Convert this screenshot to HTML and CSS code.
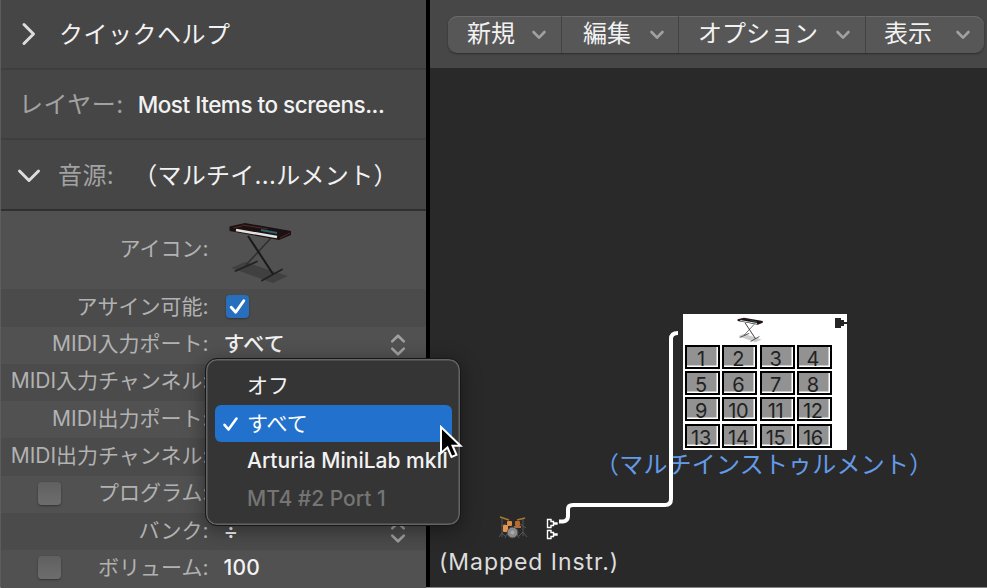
FILE: index.html
```html
<!DOCTYPE html>
<html lang="ja">
<head>
<meta charset="utf-8">
<title>Environment</title>
<link rel="stylesheet" href="styles.css">
</head>
<body>
<svg class="defs" width="0" height="0">
  <defs>
    <symbol id="chev" viewBox="0 0 16 10"><path d="M2.5 2 8 7.7 13.5 2" fill="none" stroke="currentColor" stroke-width="2.6" stroke-linecap="round" stroke-linejoin="round"/></symbol>
    <symbol id="stepper" viewBox="0 0 16 24"><path d="M2.2 8.4 8 2.7 13.8 8.4M2.2 15.6 8 21.3 13.8 15.6" fill="none" stroke="currentColor" stroke-width="2.6" stroke-linecap="round" stroke-linejoin="round"/></symbol>
    <symbol id="keyboard" viewBox="0 0 66 62">
      <path d="M3 46 17 40 60 54 45 61Z" fill="#000" opacity=".2"/>
      <path d="M43 16 18 43" stroke="#303030" stroke-width="1.6"/>
      <path d="M20 14 45 52" stroke="#191919" stroke-width="2"/>
      <path d="M7.500 49 29 39.500M34 58.500 54 47.500" stroke="#222" stroke-width="1.800" stroke-linecap="round"/>
      <path d="M1.500 4.500 17 1 63 9 63 13 51 18 1.500 9Z" fill="#1b1112"/>
      <path d="M14 3 40 7M5 6 14 4M52 16 62 11" stroke="#552827" stroke-width="1"/>
      <path d="M8 8 49 15" stroke="#e2e2e2" stroke-width="2.500"/>
      <path d="M33 8 49 11" stroke="#27636b" stroke-width="2"/>
    </symbol>
  </defs>
</svg>
<div class="app">
  <aside class="inspector">
    <header class="head">
      <svg class="right" viewBox="0 0 16 24"><path d="M3 2.500 12.500 12 3 21.500"/></svg>
      <span class="title">クイックヘルプ</span>
    </header>
    <header class="head layer">
      <span class="muted">レイヤー:</span><span class="layer-value">Most Items to screens...</span>
    </header>
    <header class="head source">
      <svg class="down" viewBox="0 0 24 16"><path d="M2.500 3 12 12.500 21.500 3"/></svg>
      <span class="muted">音源:</span><span class="source-value">（マルチイ...ルメント）</span>
    </header>
    <div class="fields">
      <div class="row tall"><span class="label">アイコン:</span><svg class="instrument"><use href="#keyboard"/></svg></div>
      <div class="row assign"><span class="label">アサイン可能:</span><span class="box on"><svg viewBox="0 0 22 22"><path d="M5 11.800 9.300 16.500 17 5.500"/></svg></span></div>
      <div class="row"><span class="label">MIDI入力ポート:</span><span class="value">すべて</span><svg class="step"><use href="#stepper"/></svg></div>
      <div class="row"><span class="label">MIDI入力チャンネル:</span></div>
      <div class="row"><span class="label">MIDI出力ポート:</span></div>
      <div class="row"><span class="label">MIDI出力チャンネル:</span></div>
      <div class="row"><span class="box off"></span><span class="label">プログラム:</span></div>
      <div class="row"><span class="label">バンク:</span><span class="value divide">÷</span><svg class="step"><use href="#stepper"/></svg></div>
      <div class="row"><span class="box off"></span><span class="label">ボリューム:</span><span class="value">100</span></div>
    </div>
  </aside>
  <main class="work">
    <nav class="bar">
      <div class="menus">
        <div class="menu new">新規<svg><use href="#chev"/></svg></div>
        <div class="menu edit">編集<svg><use href="#chev"/></svg></div>
        <div class="menu option">オプション<svg><use href="#chev"/></svg></div>
        <div class="menu view">表示<svg><use href="#chev"/></svg></div>
      </div>
    </nav>
    <div class="canvas">
      <div class="multi">
        <svg class="mini"><use href="#keyboard"/></svg>
        <svg class="port" viewBox="0 0 12 10"><path d="M0 0H6V2H9V4H12V6H9V8H6V10H0Z" fill="#252525"/></svg>
        <div class="grid">
          <span>1</span><span>2</span><span>3</span><span>4</span>
          <span>5</span><span>6</span><span>7</span><span>8</span>
          <span>9</span><span>10</span><span>11</span><span>12</span>
          <span>13</span><span>14</span><span>15</span><span>16</span>
        </div>
      </div>
      <div class="multi-name">（マルチインストゥルメント）</div>
      <svg class="cable" viewBox="0 0 130 206"><path d="M0 193.500H4Q9 193 9 188V181Q9 177 14 177H106Q112 177 112 171V11Q112 5 119 5" fill="none" stroke="#fff" stroke-width="4"/></svg>
      <svg class="drums" viewBox="0 0 30 23">
        <path d="M4 3V21M1 21 4 17 8 21M25 3V20M21 20 25 16 29 21M3 10 8 8M22 8 28 12M9 18 7 22M19 18 21 22" fill="none" stroke="#555" stroke-width="1"/>
        <path d="M2 1 11 4M19 4 27 2" stroke="#a4782e" stroke-width="1.800"/>
        <rect x="9" y="5" width="5" height="5" rx="1" fill="#dc8c49"/><rect x="17" y="5" width="5" height="5" rx="1" fill="#bd682c"/>
        <rect x="5" y="9" width="5" height="7" rx="1" fill="#e6944e"/><path d="M16 11H23" stroke="#d48a46" stroke-width="1.500"/>
        <circle cx="14.500" cy="16.500" r="5.300" fill="#8b8b8b" stroke="#555"/><circle cx="14.500" cy="16.500" r="2" fill="#aaa"/>
      </svg>
      <svg class="outs" viewBox="0 0 12 22"><path d="M1.500 1.500H5V3.500H7.500V5H11V6H7.500V7.500H5V9.500H1.500ZM1.500 12.500H5V14.500H7.500V16H11V17H7.500V18.500H5V20.500H1.500Z" fill="#292929" stroke="#fff" stroke-width="1.400"/></svg>
      <div class="mapped-name">(Mapped Instr.)</div>
    </div>
  </main>
</div>
<div class="popup">
  <div class="item kana">オフ</div>
  <div class="item kana selected"><svg viewBox="0 0 18 18"><path d="M2.500 9.800 6.500 14.500 14.500 3.500"/></svg>すべて</div>
  <div class="item">Arturia MiniLab mkII</div>
  <div class="item disabled">MT4 #2 Port 1</div>
</div>
<svg class="cursor" viewBox="0 0 26 36"><path d="M2 2V28L8.500 22.500 12.500 32 17.500 29.800 13.500 20.700H21.500Z" fill="#000" stroke="#fff" stroke-width="2"/></svg>
</body>
</html>
```
FILE: styles.css
```css
* { box-sizing: border-box; }
body { margin: 0; width: 987px; height: 588px; overflow: hidden; position: relative; background: #292929; color: #f2f2f2; font-family: Inter, "Noto Sans CJK JP", sans-serif; white-space: nowrap; }
.defs { position: absolute; }
svg { display: block; flex: none; }
.app { display: flex; height: 588px; border-bottom: 1px solid #858585; }
.inspector { width: 430px; flex: none; border-left: 1px solid #5c5c5c; border-right: 4px solid #000; background: #464646; }
.head { height: 70px; display: flex; align-items: center; font-size: 24px; line-height: 36px; border-bottom: 2px solid #3e3e3e; padding-left: 18px; }
.head svg { fill: none; stroke: #ddd; stroke-width: 3; stroke-linecap: round; stroke-linejoin: round; }
.right { width: 16px; height: 24px; margin-left: 2px; }
.title { margin-left: 22px; letter-spacing: .5px; padding-top: 1px; }
.muted { color: #a2a2a2; }
.head.layer { height: 70px; padding-top: 1px; }
.layer .muted { letter-spacing: .5px; }
.layer-value { font-size: 22.500px; font-weight: 500; letter-spacing: -.48px; margin-left: 14px; }
.head.source { height: 71px; border-color: #303030; padding: 2px 0 0 16px; }
.down { width: 24px; height: 16px; }
.source .muted { margin-left: 17px; letter-spacing: .4px; }
.source-value { margin-left: 19px; letter-spacing: .3px; }
.fields { background: #515151; }
.row { height: 37.300px; display: flex; align-items: center; position: relative; font-size: 21px; line-height: 30px; padding-bottom: 2px; }
.row:nth-child(even) { background: #4b4b4b; }
.tall { height: 78px; }
.assign { height: 37.500px; }
.label { width: 207.500px; flex: none; text-align: right; color: #b2b2b2; }
.value { margin-left: 15px; width: 166px; font-weight: 500; letter-spacing: .3px; }
.value.divide { font-size: 22px; }
.step { width: 16px; height: 24px; color: #a0a0a0; margin-top: 2px; }
.instrument { width: 66px; height: 62px; margin: 7px 0 0 19px; }
.box { width: 23px; height: 23px; border-radius: 4px; flex: none; }
.on { margin-left: 17px; background: #276fbc; box-shadow: 0 1px 2px #333; }
.on svg { width: 23px; height: 23px; fill: none; stroke: #fff; stroke-width: 2.800; stroke-linecap: round; stroke-linejoin: round; }
.off { margin-left: 37px; background: linear-gradient(#606060, #6d6d6d); box-shadow: 0 1px 2px #333; }
.off + .label { width: 147.500px; }
.work { flex: 1; min-width: 0; display: flex; flex-direction: column; }
.bar { height: 68px; background: #474747; padding: 16px 0 0 18px; }
.menus { display: flex; width: 536px; height: 37px; border-radius: 9px; background: #575757; box-shadow: 0 1px 2px #2d2d2d, inset 0 1px #6b6b6b; }
.menu { display: flex; align-items: center; justify-content: space-between; padding: 0 14px 2px 19px; font-size: 24px; line-height: 34px; border-right: 1px solid #434343; }
.menu svg { width: 16px; height: 10px; color: #a1a1a1; margin-top: 3px; }
.new { width: 114px; }
.edit { width: 117px; padding-left: 21px; padding-right: 13px; }
.option { width: 187px; }
.view { flex: 1; padding-right: 13px; padding-left: 18px; border: 0; }
.canvas { flex: 1; position: relative; background: #292929; }
.multi { position: absolute; left: 253px; top: 246px; width: 164px; height: 136px; background: #fff; }
.mini { position: absolute; left: 54px; top: 3px; width: 27px; height: 26px; }
.port { position: absolute; left: 152px; top: 4px; width: 12px; height: 10px; }
.grid { position: absolute; left: 2px; top: 31px; display: grid; grid-template-columns: repeat(4, 35px); grid-template-rows: repeat(4, 24px); column-gap: 2.300px; row-gap: 2.200px; }
.grid span { background: #929292; border: 2px solid #000; box-shadow: inset -1.500px -1.500px #fff; color: #222; font-size: 20px; line-height: 24px; text-align: center; padding-right: 3px; letter-spacing: -.3px; }
.multi-name { position: absolute; left: 165px; top: 379px; color: #639be9; font-size: 24px; line-height: 36px; letter-spacing: .2px; }
.cable { position: absolute; left: 129px; top: 260px; width: 130px; height: 206px; }
.drums { position: absolute; left: 68px; top: 448px; width: 30px; height: 23px; }
.outs { position: absolute; left: 116px; top: 450px; width: 12px; height: 22px; }
.mapped-name { position: absolute; left: 9px; top: 477px; font-size: 23px; line-height: 34px; color: #ddd; letter-spacing: .95px; }
.popup { position: absolute; left: 205px; top: 358px; width: 256px; height: 168px; padding: 8px 8px 8px 9px; background: #353535; border: 1px solid #171717; border-radius: 12px; box-shadow: inset 0 0 0 1.500px #646464, 0 4px 20px #0006; }
.item { height: 37.500px; padding-left: 32px; border-radius: 6px; font-size: 21px; line-height: 37px; position: relative; font-weight: 500; }
.kana { font-weight: 400; }
.selected { background: #2171cd; color: #fff; }
.selected svg { position: absolute; left: 7px; top: 10px; width: 18px; height: 18px; fill: none; stroke: #fff; stroke-width: 2.600; stroke-linecap: round; stroke-linejoin: round; }
.disabled { color: #757575; }
.cursor { position: absolute; left: 439px; top: 425px; width: 26px; height: 36px; }
```
